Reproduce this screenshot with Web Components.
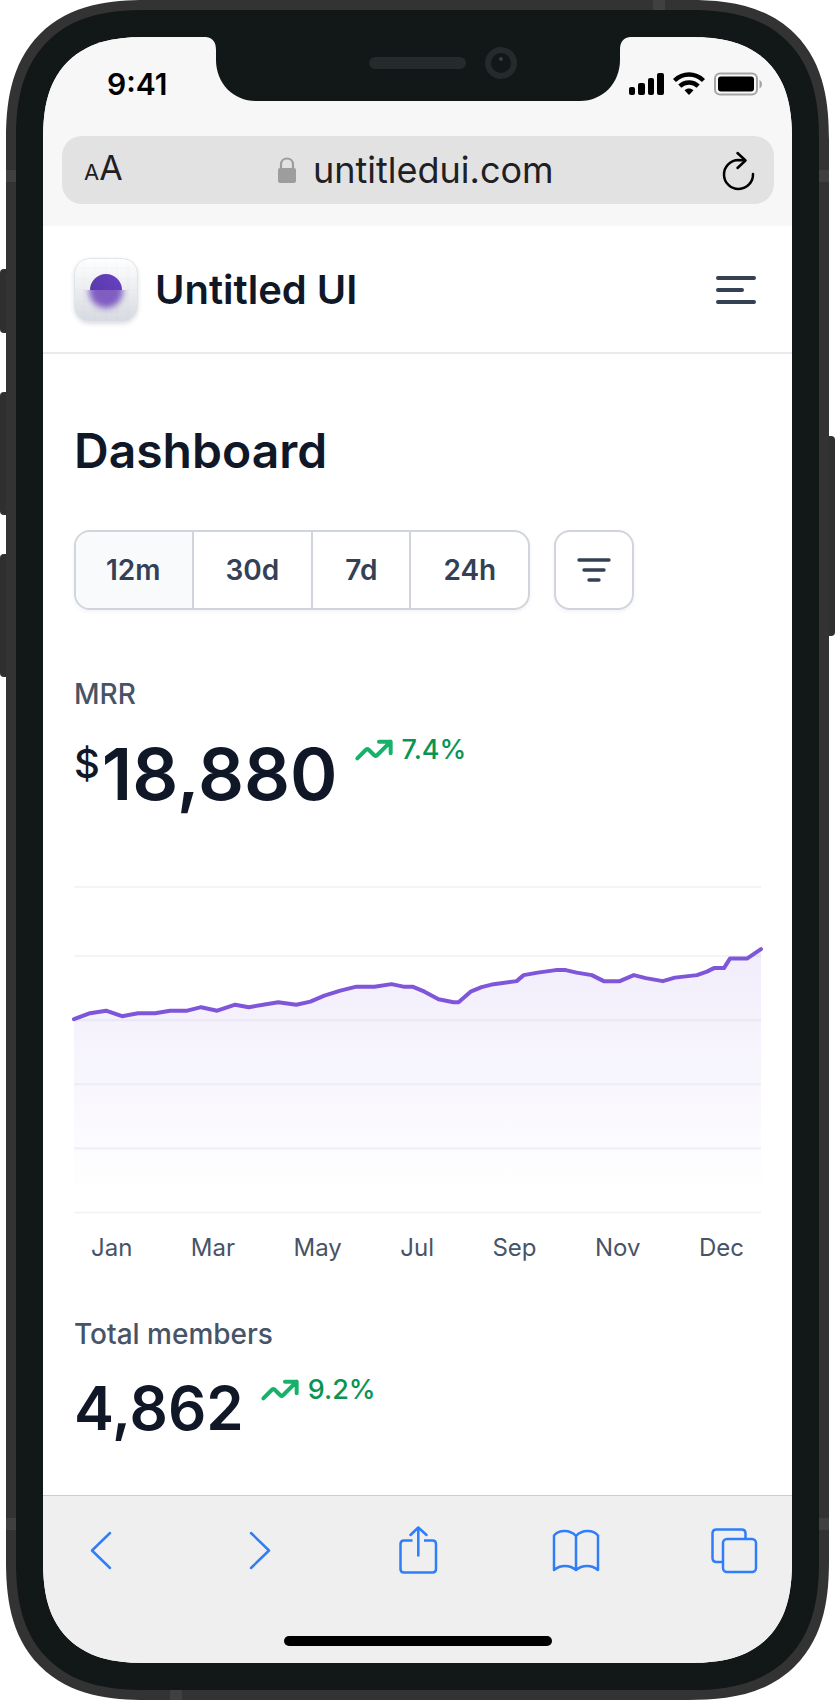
<!DOCTYPE html>
<html lang="en">
<head>
<meta charset="utf-8">
<meta name="viewport" content="width=device-width, initial-scale=1">
<title>Untitled UI – Dashboard</title>
<style>
  body { margin: 0; background: #fff; font-family: Inter, "Liberation Sans", sans-serif; color: #101828; }
</style>
</head>
<body>
<phone-frame>
  <status-bar slot="top" time="9:41"></status-bar>
  <address-bar slot="top" host-name="untitledui.com"></address-bar>
  <site-header>Untitled UI</site-header>
  <dashboard-page heading="Dashboard">
    <period-filter slot="filters" periods="12m,30d,7d,24h"></period-filter>
    <metric-value label="MRR" currency="$" value="18,880" change="7.4%" size="large"></metric-value>
    <trend-chart months="Jan,Mar,May,Jul,Sep,Nov,Dec"></trend-chart>
    <metric-value label="Total members" value="4,862" change="9.2%"></metric-value>
  </dashboard-page>
  <browser-toolbar slot="bottom"></browser-toolbar>
</phone-frame>

<script>
const RESET = `
  :host, *, *::before, *::after { box-sizing: border-box; }
  :host { display: block; }
  button, input { font: inherit; color: inherit; margin: 0; padding: 0; border: 0; background: none; }
  button { cursor: pointer; }
  svg { display: block; }
`;

function define(name, render, after) {
  customElements.define(name, class extends HTMLElement {
    constructor() {
      super();
      this.attachShadow({ mode: "open" });
    }
    connectedCallback() {
      this.shadowRoot.innerHTML = render(this);
      if (after) after(this.shadowRoot);
    }
  });
}

/* Device body: metal band, bezel, notch and side keys around the screen. */
define("phone-frame", () => `
  <style>${RESET}
    :host { padding: 0 8px 4px 6px; }
    .body { position: relative; padding: 10px; background: #333; border-radius: 118px; }
    .bezel { padding: 27px; background: #121717; border-radius: 108px; }
    .screen { position: relative; overflow: hidden; background: #fff; border-radius: 84px; }
    @supports (corner-shape: superellipse(1.32)) {
      .body { border-radius: 140px; corner-shape: superellipse(1.32); }
      .bezel { border-radius: 130px; corner-shape: superellipse(1.32); }
      .screen { border-radius: 104px; corner-shape: superellipse(1.35); }
    }
    .top { background: #f7f7f7; padding-bottom: 22px; }
    .notch { position: absolute; top: 37px; left: 50%; margin-left: -212px; }
    .key { position: absolute; width: 6px; background: #2f2f2f; }
    .key.left { left: -6px; border-radius: 4px 0 0 4px; }
    .key.right { right: -6px; border-radius: 0 4px 4px 0; }
    .silent { top: 269px; height: 64px; }
    .up { top: 392px; height: 123px; }
    .down { top: 554px; height: 123px; }
    .power { top: 436px; height: 200px; }
    .seam { position: absolute; background: #404040; }
    .seam.side { width: 10px; height: 12px; }
    .seam.end { width: 12px; height: 10px; }
  </style>
  <div class="body">
    <i class="key left silent"></i><i class="key left up"></i><i class="key left down"></i>
    <i class="key right power"></i>
    <i class="seam side" style="left:0;top:170px"></i><i class="seam side" style="right:0;top:170px"></i>
    <i class="seam side" style="left:0;bottom:170px"></i><i class="seam side" style="right:0;bottom:170px"></i>
    <i class="seam end" style="right:164px;top:0"></i><i class="seam end" style="left:164px;bottom:0"></i>
    <div class="bezel">
      <div class="screen">
        <div class="top"><slot name="top"></slot></div>
        <slot></slot>
        <slot name="bottom"></slot>
      </div>
    </div>
    <svg class="notch" width="424" height="64" viewBox="0 0 424 64" aria-hidden="true">
      <path fill="#121717" d="M0-1V0C7 1 10 5 10 13V23C10 46 27 64 50 64H374C397 64 414 46 414 23V13C414 5 417 1 424 0V-1Z"/>
      <rect x="163" y="20" width="97" height="12" rx="6" fill="#252a2d"/>
      <circle cx="295" cy="26" r="13" fill="none" stroke="#252a2d" stroke-width="6"/>
      <circle cx="295" cy="22" r="2" fill="#3a3f42"/>
    </svg>
  </div>`);

define("status-bar", el => `
  <style>${RESET}
    :host { display: flex; align-items: center; justify-content: space-between; height: 99px; padding: 0 28px 5px 64px; color: #000; }
    time { font-size: 30px; font-weight: 600; line-height: 40px; }
  </style>
  <time>${el.getAttribute("time")}</time>
  <svg width="136" height="26" viewBox="0 0 136 26" role="img" aria-label="Signal, Wi-Fi and battery">
    <rect x="1" y="16" width="6" height="8" rx="2"/>
    <rect x="10" y="12" width="7" height="12" rx="2"/>
    <rect x="20" y="7" width="6" height="17" rx="2"/>
    <rect x="29" y="2" width="7" height="22" rx="2"/>
    <g fill="none" stroke="#000" stroke-width="4.400">
      <path d="M46.500 9.500C55 1.500 67 1.500 75.500 9.500"/>
      <path d="M51.800 15.200C57 10.200 65 10.200 70.200 15.200"/>
    </g>
    <path d="M56.500 19.300C59.300 16.800 62.700 16.800 65.500 19.300L61.500 23.600Q61 24 60.500 23.600Z"/>
    <rect x="87" y="2.500" width="42" height="21" rx="5" fill="none" stroke="#a5a5a5" stroke-width="2"/>
    <rect x="90" y="5.500" width="36" height="15" rx="3"/>
    <path d="M131.500 9C134.800 10.500 134.800 16 131.500 17.500Z" fill="#a5a5a5"/>
  </svg>`);

define("address-bar", el => `
  <style>${RESET}
    :host { padding: 0 18px 0 19px; }
    form { display: grid; grid-template-columns: 1fr auto 1fr; align-items: center; height: 68px; padding: 0 18px 0 22px; border-radius: 20px; background: #e2e2e2; color: #1f2023; }
    .size { justify-self: start; display: flex; align-items: baseline; font-size: 22px; line-height: 44px; }
    .size b { font-size: 34px; font-weight: 400; }
    .url { display: flex; align-items: center; gap: 16px; }
    input { width: 250px; height: 44px; font-size: 36px; outline: none; }
    .reload { justify-self: end; }
  </style>
  <form onsubmit="return false">
    <button class="size" type="button" aria-label="Text size">A<b>A</b></button>
    <label class="url">
      <svg width="20" height="28" viewBox="0 0 20 28" role="img" aria-label="Secure">
        <path d="M4 13V8.500C4 0.500 16 0.500 16 8.500V13" fill="none" stroke="#9d9d9d" stroke-width="2.200"/>
        <rect x="1" y="12" width="18" height="15" rx="2" fill="#9d9d9d"/>
      </svg>
      <input type="text" inputmode="url" value="${el.getAttribute("host-name")}" aria-label="Address">
    </label>
    <button class="reload" type="button" aria-label="Reload">
      <svg width="36" height="44" viewBox="0 0 36 44" fill="none" stroke="#000" stroke-width="2.500" stroke-linecap="round" stroke-linejoin="round">
        <path d="M33 26A14.500 14.500 0 1 1 18.500 12L25 12.500"/>
        <path d="M17.500 5L25.500 12.500L17.500 20"/>
      </svg>
    </button>
  </form>`);

define("site-header", () => `
  <style>${RESET}
    :host { display: flex; align-items: center; justify-content: space-between; height: 128px; padding: 2px 31px 0; border-bottom: 2px solid #eaeaec; background: #fff; }
    a { display: flex; align-items: center; gap: 17px; font-size: 40px; font-weight: 600; line-height: 48px; color: #101828; text-decoration: none; }
    .mark { filter: drop-shadow(0 2px 2px rgba(16, 24, 40, .14)); }
  </style>
  <a href="#">
    <svg class="mark" width="64" height="64" viewBox="0 0 64 64" aria-hidden="true">
      <defs>
        <linearGradient id="tile" x1="0" y1="0" x2="0" y2="1"><stop stop-color="#fff"/><stop offset="1" stop-color="#d7dae1"/></linearGradient>
        <linearGradient id="dot" x1="0" y1="1" x2="1" y2="0"><stop stop-color="#53389e"/><stop offset="1" stop-color="#6941c6"/></linearGradient>
        <filter id="soft" x="-40%" y="-40%" width="180%" height="180%"><feGaussianBlur stdDeviation="3"/></filter>
        <clipPath id="upper"><rect width="64" height="32"/></clipPath>
        <clipPath id="lower"><rect y="32" width="64" height="32"/></clipPath>
      </defs>
      <rect x="0.500" y="0.500" width="63" height="63" rx="15" fill="url(#tile)" stroke="#e1e4e9"/>
      <path d="M10 1V63M21 1V63M32 1V63M43 1V63M54 1V63M1 10H63M1 21H63M1 32H63M1 43H63M1 54H63" stroke="#101828" stroke-opacity=".02"/>
      <circle cx="32" cy="32" r="16" fill="url(#dot)" clip-path="url(#upper)"/>
      <g clip-path="url(#lower)"><circle cx="32" cy="33" r="17" fill="#7450bd" opacity=".9" filter="url(#soft)"/></g>
    </svg>
    <slot></slot>
  </a>
  <button type="button" aria-label="Menu">
    <svg width="48" height="48" viewBox="0 0 48 48" fill="none" stroke="#344054" stroke-width="4" stroke-linecap="round">
      <path d="M5 12H41M5 24H29M5 36H41"/>
    </svg>
  </button>`);

define("dashboard-page", el => `
  <style>${RESET}
    :host { padding: 65px 31px 49px; }
    h1 { margin: 0 0 47px; font-size: 48px; font-weight: 600; line-height: 64px; }
    ::slotted(period-filter) { margin-bottom: 64px; }
    ::slotted(trend-chart) { margin: 68px 0 48px; }
  </style>
  <h1>${el.getAttribute("heading")}</h1>
  <slot name="filters"></slot>
  <slot></slot>`);

define("period-filter", el => `
  <style>${RESET}
    :host { display: flex; gap: 24px; }
    .group, .more { height: 80px; border: 2px solid #d0d5dd; border-radius: 16px; background: #fff; box-shadow: 0 2px 4px rgba(16, 24, 40, .05); overflow: hidden; }
    .group { display: flex; }
    .group button { padding: 0 32px; font-size: 28px; font-weight: 600; line-height: 40px; color: #344054; }
    .group button:first-child { padding: 0 31px 0 30px; }
    .group button + button { border-left: 2px solid #d0d5dd; }
    .group button[aria-pressed="true"] { background: #f9fafb; }
    .more { display: grid; place-items: center; width: 80px; color: #344054; }
  </style>
  <div class="group" role="group" aria-label="Period">
    ${el.getAttribute("periods").split(",").map((p, i) => `<button type="button" aria-pressed="${i === 0}">${p}</button>`).join("")}
  </div>
  <button class="more" type="button" aria-label="Filters">
    <svg width="40" height="40" viewBox="0 0 40 40" fill="none" stroke="currentColor" stroke-width="3.340" stroke-linecap="round">
      <path d="M5 10H35M10 20H30M15 30H25"/>
    </svg>
  </button>`, root => {
  const items = root.querySelectorAll(".group button");
  items.forEach(b => b.addEventListener("click", () => items.forEach(o => o.setAttribute("aria-pressed", o === b))));
});

define("metric-value", el => `
  <style>${RESET}
    .label { margin: 0 0 16px; font-size: 28px; font-weight: 500; line-height: 40px; color: #475467; }
    .row { display: flex; align-items: flex-start; gap: 16px; }
    .value { display: flex; gap: 2px; margin: 0; font-size: 60px; font-weight: 600; line-height: 76px; }
    .value small { font-size: 40px; font-weight: 500; line-height: 68px; }
    :host([size="large"]) .value { font-size: 72px; line-height: 88px; }
    .change { display: flex; gap: 8px; margin: 0; font-size: 27px; font-weight: 500; line-height: 40px; color: #079455; }
  </style>
  <p class="label">${el.getAttribute("label")}</p>
  <div class="row">
    <p class="value">${el.hasAttribute("currency") ? `<small>${el.getAttribute("currency")}</small>` : ""}<span>${el.getAttribute("value")}</span></p>
    <p class="change">
      <svg width="40" height="40" viewBox="0 0 24 24" fill="none" stroke="#17b26a" stroke-width="2.400" stroke-linecap="round" stroke-linejoin="round" aria-hidden="true">
        <path d="M22 7L14.131 14.869C13.735 15.265 13.537 15.463 13.309 15.537A1 1 0 0 1 12.691 15.537C12.463 15.463 12.265 15.265 11.869 14.869L9.131 12.131C8.735 11.735 8.537 11.537 8.309 11.463A1 1 0 0 0 7.691 11.463C7.463 11.537 7.265 11.735 6.869 12.131L2 17M22 7H15M22 7V14"/>
      </svg>
      <span>${el.getAttribute("change")}</span>
    </p>
  </div>`);

const LINE = "0,133 16,127 32,124.500 48,130 64,127 81,127 96,124.500 113,124.500 127,121 143,124.500 161,118.500 174.500,121 204,116 222,118.500 236,115.500 250,109.500 266,104.500 282,100.500 300,100.500 317,98 329,100.500 338,100.500 350,105.500 364,113 379,116 384,116 396,105.500 407,101 419,98 442,95 449,89 463,86.500 481,84 491,84 502,86.500 517,89 529,95 545,95 559,89 571,92 588,95 600,91.500 622,89 632,85.500 639,82 649,82 655,72.500 672,72.500 686,63";

define("trend-chart", el => `
  <style>${RESET}
    svg { width: 100%; height: auto; overflow: visible; }
    .months { display: flex; justify-content: space-between; padding: 16px 17px 0; font-size: 24px; line-height: 36px; color: #475467; }
  </style>
  <svg viewBox="0 0 686 328" role="img" aria-label="Monthly recurring revenue, last 12 months">
    <defs>
      <linearGradient id="fade" gradientUnits="userSpaceOnUse" x1="0" y1="62" x2="0" y2="310">
        <stop stop-color="#7f56d9" stop-opacity=".11"/><stop offset="1" stop-color="#7f56d9" stop-opacity="0"/>
      </linearGradient>
    </defs>
    <path d="M0 1H686M0 70H686M0 134H686M0 198H686M0 262H686M0 326H686" stroke="#f2f4f7" stroke-width="2"/>
    <polygon points="${LINE} 686,326 0,326" fill="url(#fade)"/>
    <polyline points="${LINE}" fill="none" stroke="#7f56d9" stroke-width="4" stroke-linecap="round" stroke-linejoin="round"/>
  </svg>
  <div class="months">${el.getAttribute("months").split(",").map(m => `<span>${m}</span>`).join("")}</div>`);

define("browser-toolbar", () => `
  <style>${RESET}
    :host { padding: 30px 34px 17px; border-top: 1px solid #c8cccb; background: #efefef; }
    nav { display: flex; justify-content: space-between; }
    svg { fill: none; stroke: #2f7df8; stroke-width: 2.500; stroke-linecap: round; stroke-linejoin: round; }
    .home { width: 268px; height: 10px; margin: 62px auto 0; border-radius: 5px; background: #000; }
  </style>
  <nav aria-label="Browser">
    <button type="button" aria-label="Back"><svg width="48" height="48" viewBox="0 0 48 48"><path d="M33 7L15 24.500L33 42"/></svg></button>
    <button type="button" aria-label="Forward"><svg width="48" height="48" viewBox="0 0 48 48"><path d="M16 7L34 24.500L16 42"/></svg></button>
    <button type="button" aria-label="Share"><svg width="48" height="48" viewBox="0 0 48 48"><path stroke-linecap="butt" d="M18.500 14.500H10Q6.500 14.500 6.500 18V43Q6.500 46.500 10 46.500H38.500Q42 46.500 42 43V18Q42 14.500 38.500 14.500H30M24.300 30.500V1.500"/><path d="M16.500 9L24.300 1.500L32.500 9"/></svg></button>
    <button type="button" aria-label="Bookmarks"><svg width="48" height="48" viewBox="0 0 48 48"><path d="M24 10C18 3.500 7 3.500 2 9.500V44C8 38.500 18 38.500 24 44C30 38.500 40 38.500 46 44V9.500C41 3.500 30 3.500 24 10ZM24 10V44"/></svg></button>
    <button type="button" aria-label="Tabs"><svg width="48" height="48" viewBox="0 0 48 48"><rect x="13" y="13" width="33" height="33" rx="4"/><path stroke-linecap="butt" d="M13 36H6.500Q2.500 36 2.500 32V7.500Q2.500 3.500 6.500 3.500H31.500Q35.500 3.500 35.500 7.500V13"/></svg></button>
  </nav>
  <div class="home"></div>`);
</script>
</body>
</html>
